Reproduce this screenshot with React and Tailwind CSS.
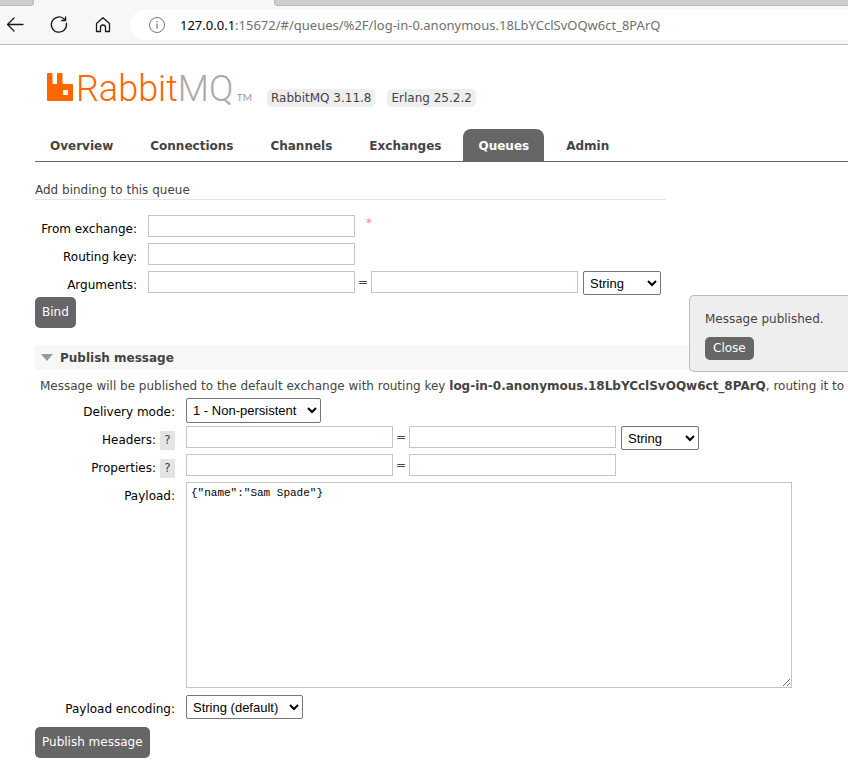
import { useState } from "react";

const TABS = ["Overview", "Connections", "Channels", "Exchanges", "Queues", "Admin"];
const TYPES = ["String", "Number", "Boolean", "List"];

function TextInput(props) {
  return <input type="text" className="block h-[22px] w-[207px] shrink-0 border border-[#c4c4c4] bg-white px-1" {...props} />;
}

function Select({ width, options, ...rest }) {
  return (
    <select
      className={
        "block shrink-0 rounded-[2px] border border-[#767676] bg-white pl-[2px] font-['Liberation_Sans',Arial,sans-serif] text-[13px] text-black " + width
      }
      {...rest}
    >
      {options.map((o) => (
        <option key={o}>{o}</option>
      ))}
    </select>
  );
}

function Row({ id, label, labelWidth, help, children }) {
  return (
    <div className="flex min-h-[26px] items-start gap-[11px]">
      <div className={"-mb-[2px] flex h-7 shrink-0 items-center justify-end gap-1 text-black " + labelWidth}>
        <label htmlFor={id}>{label}</label>
        {help && (
          <button type="button" aria-label={"Help for " + label} className="h-[19px] w-[15px] bg-[#e4e4e4] text-[#444]">
            ?
          </button>
        )}
      </div>
      {children}
    </div>
  );
}

function Equals() {
  return <span className="w-4 shrink-0 text-center leading-[22px]">=</span>;
}

function BrowserBar() {
  return (
    <header className="border-b border-[#c0c0c0] bg-[#f7f7f7]">
      <div className="flex h-[6px] justify-between">
        <div className="w-[34px] rounded-br-[4px] border-r border-b border-[#b8b8b8] bg-[#cdcdcd]" />
        <div className="ml-[240px] flex-1 rounded-bl-[4px] border-b border-l border-[#b8b8b8] bg-[#cdcdcd]" />
      </div>
      <div className="flex h-[38px] items-center">
        <button type="button" aria-label="Back" className="ml-[5px]">
          <svg width="20" height="20" viewBox="0 0 20 20" fill="none" stroke="#1b1b1b" strokeWidth="1.3" strokeLinecap="round" strokeLinejoin="round">
            <path d="M18 9.5H2.5M9 3 2.5 9.5 9 16" />
          </svg>
        </button>
        <button type="button" aria-label="Reload" className="ml-6">
          <svg width="20" height="20" viewBox="0 0 20 20" fill="none" stroke="#1b1b1b" strokeWidth="1.3" strokeLinecap="round" strokeLinejoin="round">
            <path d="M17.4 8.2A7.6 7.6 0 1 1 14.6 3.6L16.6 5.4M16.6 2v3.5h-4" />
          </svg>
        </button>
        <button type="button" aria-label="Home" className="ml-6">
          <svg width="20" height="20" viewBox="0 0 20 20" fill="none" stroke="#1b1b1b" strokeWidth="1.3" strokeLinejoin="round">
            <path d="M3.5 8.5 10 2.8l6.500 5.700V16.500h-4V12.500a2.500 2.500 0 0 0-5 0v4h-4z" />
          </svg>
        </button>
        <div className="ml-[17px] flex h-[30px] flex-1 items-center gap-[14px] rounded-l-full bg-white pl-[18px]">
          <svg width="18" height="18" viewBox="0 0 18 18" fill="none" stroke="#777" strokeWidth="1">
            <circle cx="9" cy="9" r="7.500" />
            <path d="M9 7.500v5M9 5v1.300" strokeWidth="1.200" />
          </svg>
          <div className="font-['Noto_Sans','Open_Sans',sans-serif] text-[13px] whitespace-nowrap text-[#6f6f6f]">
            <span className="text-black">127.0.0.1</span>:15672/#/queues/%2F/log-in-0.anonymous.18LbYCclSvOQw6ct_8PArQ
          </div>
        </div>
      </div>
    </header>
  );
}

function Logo() {
  return (
    <a href="#overview" aria-label="RabbitMQ" className="flex w-[205px] shrink-0 items-start">
      <svg width="27" height="29" viewBox="0 0 27 29" fill="#f60" className="mt-[10px] shrink-0">
        <path
          fillRule="evenodd"
          d="M1 0h3.500Q5.500 0 5.500 1V10q0 1 1 1h2.500q1 0 1-1V1Q10 0 11 0h3.500Q15.500 0 15.500 1V10q0 1 1 1h8.500Q26 11 26 12v15q0 1-1 1h-24Q0 28 0 27v-26Q0 0 1 0zM16 17v5h5v-5z"
        />
      </svg>
      <span className="ml-[2px] font-['Roboto',sans-serif] text-[36px] leading-[52px] font-light text-[#f60]">
        Rabbit<span className="text-[#aaa]">MQ</span>
      </span>
      <span className="mt-[22px] ml-auto font-['Lato',sans-serif] text-[10px] leading-6 text-[#999]">TM</span>
    </a>
  );
}

export default function App() {
  const [payload, setPayload] = useState('{"name":"Sam Spade"}');
  const [notice, setNotice] = useState(true);
  return (
    <div className="relative min-h-screen overflow-hidden bg-white font-['DejaVu_Sans',Verdana,sans-serif] text-[12px] leading-4 text-[#444]">
      <BrowserBar />

      <div className="flex h-[84px] items-start pt-[18px] pl-[47px]">
        <Logo />
        <div className="mt-[26px] ml-[15px] flex gap-3">
          <span className="rounded-[5px] bg-[#eee] px-1 py-px">RabbitMQ 3.11.8</span>
          <span className="rounded-[5px] bg-[#eee] px-1 py-px">Erlang 25.2.2</span>
        </div>
      </div>

      <nav className="ml-[35px] flex gap-[7px] border-b border-[#666]">
        {TABS.map((t) => (
          <a
            key={t}
            href={"#" + t.toLowerCase()}
            className={"rounded-t-[8px] px-[15px] pt-[9px] pb-[7px] font-bold " + (t === "Queues" ? "bg-[#666] text-white" : "text-[#444]")}
          >
            {t}
          </a>
        ))}
      </nav>

      <main className="pl-[35px]">
        <form onSubmit={(e) => e.preventDefault()}>
          <h3 className="mt-5 w-[631px] border-b border-[#e4e4e4] pb-px">Add binding to this queue</h3>
          <div className="mt-[15px] flex flex-col gap-[2px]">
            <Row id="exchange" label="From exchange:" labelWidth="w-[102px]">
              <TextInput id="exchange" />
              <span className="text-[#f88]">*</span>
            </Row>
            <Row id="routing" label="Routing key:" labelWidth="w-[102px]">
              <TextInput id="routing" />
            </Row>
            <Row id="args" label="Arguments:" labelWidth="w-[102px]">
              <div className="flex">
                <TextInput id="args" />
                <Equals />
                <TextInput aria-label="Argument value" />
                <div className="ml-[5px]">
                  <Select aria-label="Argument type" width="h-6 w-[78px]" options={TYPES} />
                </div>
              </div>
            </Row>
          </div>
          <button type="submit" className="block rounded-[5px] bg-[#666] px-[7px] py-2 leading-[15px] text-white">
            Bind
          </button>
        </form>

        <section className="mt-[17px]">
          <h2 className="flex h-[25px] items-center gap-[7px] bg-[#f7f7f7] pl-[6px] font-bold">
            <svg width="12" height="7" viewBox="0 0 12 7" fill="#999">
              <path d="M0 0h12L6 7z" />
            </svg>
            Publish message
          </h2>
          <form onSubmit={(e) => e.preventDefault()}>
            <p className="mt-2 ml-[5px] whitespace-nowrap">
              Message will be published to the default exchange with routing key <b>log-in-0.anonymous.18LbYCclSvOQw6ct_8PArQ</b>, routing it to
            </p>
            <div className="mt-1 flex flex-col gap-[2px]">
              <Row id="mode" label="Delivery mode:" labelWidth="w-[140px]">
                <Select id="mode" width="h-[25px] w-[135px]" options={["1 - Non-persistent", "2 - Persistent"]} />
              </Row>
              <Row id="headers" label="Headers:" labelWidth="w-[140px]" help>
                <div className="flex">
                  <TextInput id="headers" />
                  <Equals />
                  <TextInput aria-label="Header value" />
                  <div className="ml-[5px]">
                    <Select aria-label="Header type" width="h-6 w-[78px]" options={TYPES} />
                  </div>
                </div>
              </Row>
              <Row id="properties" label="Properties:" labelWidth="w-[140px]" help>
                <div className="flex">
                  <TextInput id="properties" />
                  <Equals />
                  <TextInput aria-label="Property value" />
                </div>
              </Row>
              <Row id="payload" label="Payload:" labelWidth="w-[140px]">
                <textarea
                  id="payload"
                  value={payload}
                  onChange={(e) => setPayload(e.target.value)}
                  className="mb-[5px] block h-[206px] w-[606px] shrink-0 resize border border-[#c4c4c4] px-1 py-[2px] font-['Liberation_Mono',monospace] text-[11px] leading-4 text-black"
                />
              </Row>
              <Row id="encoding" label="Payload encoding:" labelWidth="w-[140px]">
                <Select id="encoding" width="h-6 w-[117px]" options={["String (default)", "Base64"]} />
              </Row>
            </div>
            <button type="submit" className="mt-[6px] block rounded-[5px] bg-[#666] px-[7px] py-2 leading-[15px] text-white">
              Publish message
            </button>
          </form>
        </section>
      </main>

      {notice && (
        <div role="status" className="absolute top-[295px] right-0 w-[159px] rounded-l-[5px] border border-r-0 border-[#bbb] bg-[#eee] py-[11px] pl-[15px]">
          <p className="py-1">Message published.</p>
          <button type="button" onClick={() => setNotice(false)} className="mt-[6px] block rounded-[5px] bg-[#666] px-2 py-1 leading-[15px] text-white">
            Close
          </button>
        </div>
      )}
    </div>
  );
}
